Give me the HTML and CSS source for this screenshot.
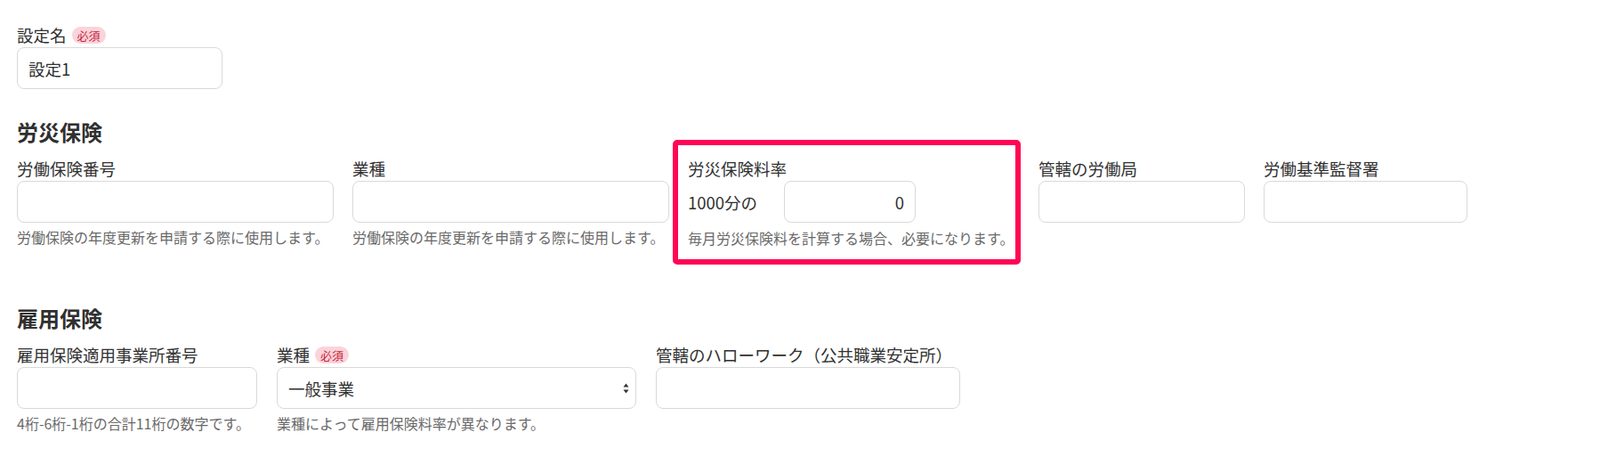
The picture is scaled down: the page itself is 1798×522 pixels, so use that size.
FILE: index.html
```html
<!DOCTYPE html>
<html lang="ja">
<head>
<meta charset="utf-8">
<title>設定</title>
<link rel="stylesheet" href="styles.css">
</head>
<body>
<div class="page">
  <div class="field">
    <div class="label">設定名<span class="badge">必須</span></div>
    <input class="input name-input" type="text" value="設定1">
  </div>

  <h2 class="section-title first">労災保険</h2>
  <div class="row row-rousai">
    <div class="col c-r1">
      <div class="label">労働保険番号</div>
      <input class="input" type="text">
      <div class="help">労働保険の年度更新を申請する際に使用します。</div>
    </div>
    <div class="col c-r2">
      <div class="label">業種</div>
      <input class="input" type="text">
      <div class="help">労働保険の年度更新を申請する際に使用します。</div>
    </div>
    <div class="col c-r3">
      <div class="label">労災保険料率</div>
      <div class="rate-row">
        <span class="rate-prefix">1000分の</span>
        <input class="input rate-input" type="text" value="0">
      </div>
      <div class="help help-rate">毎月労災保険料を計算する場合、必要になります。</div>
      <div class="highlight"></div>
    </div>
    <div class="col c-r4">
      <div class="label">管轄の労働局</div>
      <input class="input" type="text">
    </div>
    <div class="col c-r5">
      <div class="label">労働基準監督署</div>
      <input class="input" type="text">
    </div>
  </div>

  <h2 class="section-title second">雇用保険</h2>
  <div class="row row-koyou">
    <div class="col c-k1">
      <div class="label">雇用保険適用事業所番号</div>
      <input class="input" type="text">
      <div class="help">4桁-6桁-1桁の合計11桁の数字です。</div>
    </div>
    <div class="col c-k2">
      <div class="label">業種<span class="badge">必須</span></div>
      <div class="select-wrap">
        <select class="input select">
          <option>一般事業</option>
        </select>
        <svg class="select-arrows" width="7" height="12" viewBox="0 0 7 12" aria-hidden="true">
          <path d="M3.5 0.5 L6.5 4.5 L0.5 4.5 Z" fill="#333"/>
          <path d="M0.5 7.5 L6.5 7.5 L3.5 11.5 Z" fill="#333"/>
        </svg>
      </div>
      <div class="help">業種によって雇用保険料率が異なります。</div>
    </div>
    <div class="col c-k3">
      <div class="label">管轄のハローワーク（公共職業安定所）</div>
      <input class="input" type="text">
    </div>
  </div>
</div>
</body>
</html>
```

FILE: styles.css
```css
* {
  box-sizing: border-box;
}

body {
  margin: 0;
  background: #ffffff;
  color: #333333;
  font-family: "Noto Sans CJK JP", "Noto Sans", sans-serif;
}

.page {
  padding: 27px 19px 0 19px;
}

.label {
  display: flex;
  align-items: center;
  gap: 6px;
  font-size: 18.5px;
  line-height: 24px;
  height: 24px;
  margin-bottom: 2px;
  color: #303030;
  white-space: nowrap;
}

.badge {
  display: inline-flex;
  align-items: center;
  justify-content: center;
  height: 19px;
  padding: 0 6px;
  border-radius: 10px;
  background: #fad4da;
  color: #c8243f;
  font-size: 13px;
  line-height: 19px;
}

.input {
  display: block;
  width: 100%;
  height: 47px;
  border: 1px solid #d9d9d9;
  border-radius: 8px;
  background: #ffffff;
  padding: 0 12px;
  font-family: "Noto Sans CJK JP", "Noto Sans", sans-serif;
  font-size: 18.5px;
  color: #303030;
  outline: none;
}

.name-input {
  width: 231px;
}

.help {
  margin-top: 5px;
  font-size: 16px;
  line-height: 22px;
  color: #696969;
  white-space: nowrap;
}

.section-title {
  margin: 32px 0 13px 0;
  font-size: 24px;
  line-height: 32px;
  font-weight: 700;
  color: #303030;
}

.section-title.second {
  margin-top: 63px;
}

.row {
  display: flex;
  align-items: flex-start;
}

.row-rousai {
  gap: 21px;
}

.row-koyou {
  gap: 22px;
}

.col {
  position: relative;
  flex: none;
}

.c-r1 { width: 356px; }
.c-r2 { width: 356px; }
.c-r3 { width: 373px; }
.c-r4 { width: 232px; }
.c-r5 { width: 229px; }

.c-k1 { width: 270px; }
.c-k2 { width: 404px; }
.c-k3 { width: 342px; }

.rate-row {
  display: flex;
  align-items: center;
}

.rate-prefix {
  width: 108px;
  flex: none;
  font-size: 18.5px;
  line-height: 24px;
  color: #303030;
}

.rate-input {
  width: 148px;
  text-align: right;
}

.help-rate {
  margin-top: 6px;
}

.highlight {
  position: absolute;
  top: -20px;
  bottom: -19px;
  left: -17px;
  right: -1px;
  border: 6px solid #ff0556;
  border-radius: 5px;
  pointer-events: none;
}

.select-wrap {
  position: relative;
}

.select {
  appearance: none;
  -webkit-appearance: none;
  padding-right: 30px;
}

.select-arrows {
  position: absolute;
  right: 8px;
  top: 18px;
  pointer-events: none;
}
```
